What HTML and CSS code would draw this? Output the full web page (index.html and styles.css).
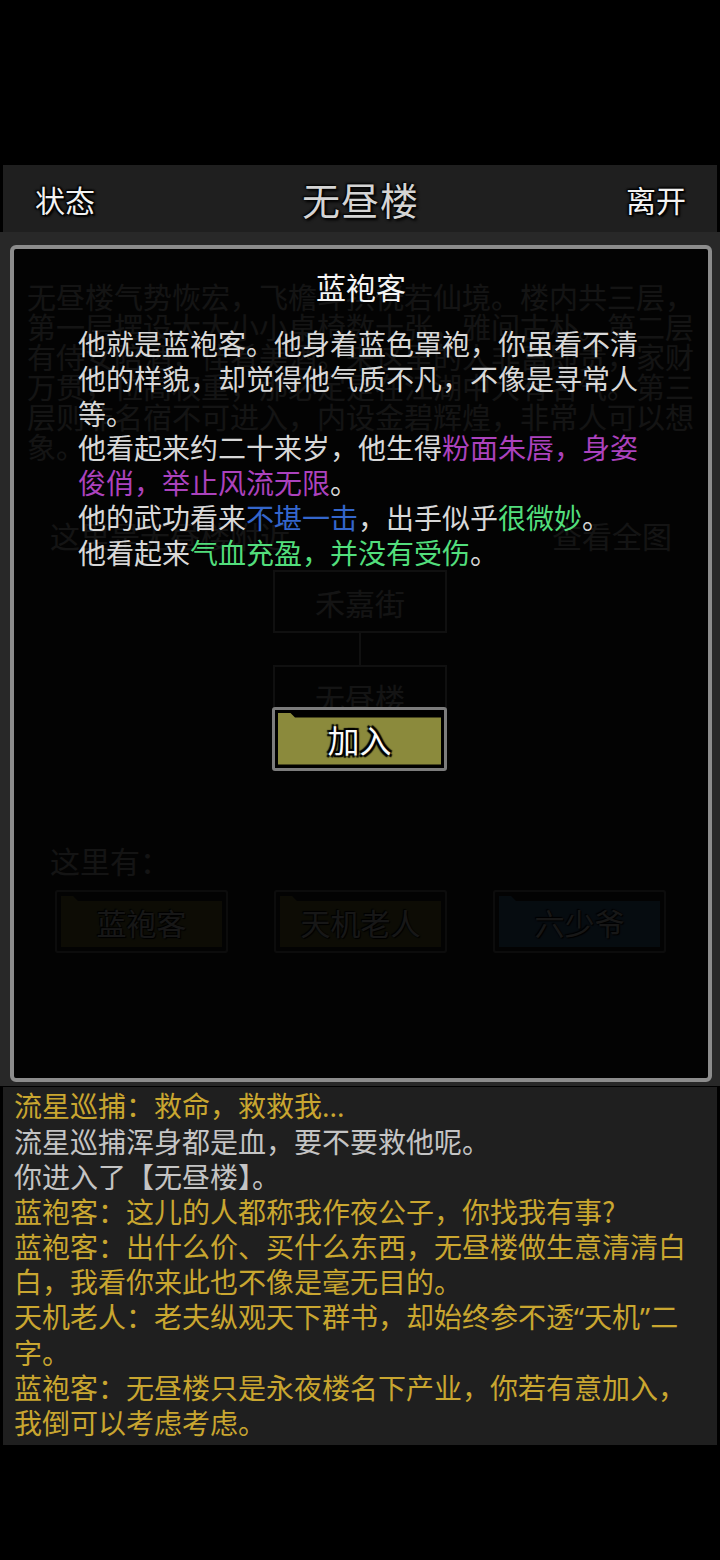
FILE: index.html
```html
<!DOCTYPE html>
<html lang="zh-CN">
<head>
    <meta charset="UTF-8">
    <meta name="viewport" content="width=device-width, initial-scale=1.0">
    <title>无昼楼</title>
    <link rel="stylesheet" href="styles.css">
</head>
<body>
<div class="screen">
    <div class="notch-space"></div>

    <header class="topbar">
        <span class="top-btn left">状态</span>
        <h1 class="top-title">无昼楼</h1>
        <span class="top-btn right">离开</span>
    </header>

    <main class="scene">
        <p class="scene-desc">无昼楼气势恢宏，飞檐斗拱恍若仙境。楼内共三层，<br>第一层摆设大大小小桌椅数十张，雅间古朴。第二层<br>有侍女陪酒，佳肴美酒。来这里的人非富即贵，家财<br>万贯，位高权重，那必定是在江湖中大有名气。第三<br>层则非名宿不可进入，内设金碧辉煌，非常人可以想<br>象。</p>

        <div class="scene-row">
            <span>这里是无昼楼附近</span>
            <span>查看全图</span>
        </div>

        <div class="map">
            <div class="map-node">禾嘉街</div>
            <div class="map-link"></div>
            <div class="map-node">无昼楼</div>
        </div>

        <div class="here">这里有：</div>
        <div class="npc-list">
            <div class="npc"><div class="npc-fill olive">蓝袍客</div></div>
            <div class="npc"><div class="npc-fill olive">天机老人</div></div>
            <div class="npc"><div class="npc-fill blue">六少爷</div></div>
        </div>

        <div class="modal">
            <h2 class="modal-title">蓝袍客</h2>
            <p class="modal-text">他就是蓝袍客。他身着蓝色罩袍，你虽看不清他的样貌，却觉得他气质不凡，不像是寻常人等。<br>他看起来约二十来岁，他生得<span class="purple">粉面朱唇，身姿俊俏，举止风流无限</span>。<br>他的武功看来<span class="blue-t">不堪一击</span>，出手似乎<span class="green">很微妙</span>。<br>他看起来<span class="green">气血充盈，并没有受伤</span>。</p>
            <button class="join" type="button"><span class="join-fill">加入</span></button>
        </div>
    </main>

    <section class="log">
        <p class="say">流星巡捕：救命，救救我<span class="latin">...</span></p>
        <p>流星巡捕浑身都是血，要不要救他呢。</p>
        <p>你进入了【无昼楼】。</p>
        <p class="say">蓝袍客：这儿的人都称我作夜公子，你找我有事?</p>
        <p class="say">蓝袍客：出什么价、买什么东西，无昼楼做生意清清白白，我看你来此也不像是毫无目的。</p>
        <p class="say">天机老人：老夫纵观天下群书，却始终参不透<span class="latin">“</span>天机<span class="latin">”</span>二字。</p>
        <p class="say">蓝袍客：无昼楼只是永夜楼名下产业，你若有意加入，我倒可以考虑考虑。</p>
    </section>
</div>
</body>
</html>
```

FILE: styles.css
```css
body {
    margin: 0;
    background: #000;
    font-family: "Noto Sans CJK SC", "Noto Sans", sans-serif;
    color: #d8d8d8;
}
p, h1, h2 {
    margin: 0;
    font-weight: normal;
}
.screen {
    width: 720px;
    height: 1560px;
    display: flex;
    flex-direction: column;
}
.notch-space {
    height: 165px;
}

/* top bar */
.topbar {
    height: 67px;
    margin: 0 3px;
    background: #1f1f1f;
    display: grid;
    grid-template-columns: 1fr auto 1fr;
    align-items: center;
    padding: 0 31px 0 32px;
}
.top-btn {
    font-size: 30px;
    color: #f2f2f2;
    text-shadow: 0 0 2px #000, 2px 2px 2px #000, -1px -1px 2px #000, 1px -1px 2px #000, -1px 1px 2px #000;
}
.top-btn.right {
    justify-self: end;
}
.top-title {
    font-size: 38px;
    color: #d4d4d4;
    letter-spacing: 1px;
    text-shadow: 0 0 3px #000, 2px 2px 3px #000, -1px -1px 2px #000;
}

/* scene behind the dialog */
.scene {
    position: relative;
    height: 854px;
    background: #282828;
    color: #dcdcdc;
}
.scene-desc {
    padding: 49px 0 0 27px;
    font-size: 29px;
    line-height: 30px;
    white-space: nowrap;
}
.scene-row {
    display: flex;
    justify-content: space-between;
    margin-top: 54px;
    padding: 0 48px 0 50px;
    font-size: 30px;
    line-height: 40px;
}
.map {
    display: flex;
    flex-direction: column;
    align-items: center;
    margin-top: 15px;
}
.map-node {
    width: 174px;
    height: 63px;
    box-sizing: border-box;
    border: 2px solid #b0b0b0;
    display: flex;
    align-items: center;
    justify-content: center;
    font-size: 30px;
}
.map-link {
    width: 2px;
    height: 32px;
    background: #b0b0b0;
}
.here {
    margin-top: 112px;
    padding-left: 50px;
    font-size: 30px;
    line-height: 40px;
}
.npc-list {
    display: grid;
    grid-template-columns: repeat(3, 173px);
    column-gap: 46px;
    margin-top: 10px;
    padding-left: 55px;
}
.npc {
    height: 63px;
    box-sizing: border-box;
    border: 2px solid #8a8a8a;
    border-radius: 3px;
    padding: 4px;
}
.npc-fill {
    height: 100%;
    display: flex;
    align-items: center;
    justify-content: center;
    font-size: 30px;
    color: #fff;
    clip-path: polygon(0 0, 12px 0, 17px 5px, 100% 5px, 100% 100%, 0 100%);
    text-shadow: 0 0 2px #000, 1px 1px 1px #000, -1px -1px 1px #000;
}
.npc-fill.olive {
    background: #8b8a3c;
}
.npc-fill.blue {
    background: #4680b4;
}

/* dialog */
.modal {
    position: absolute;
    top: 13px;
    left: 10px;
    width: 702px;
    height: 837px;
    box-sizing: border-box;
    border: 4px solid #8c8c8c;
    border-radius: 6px;
    background: rgba(0, 0, 0, 0.91);
    display: flex;
    flex-direction: column;
    align-items: center;
}
.modal-title {
    margin-top: 17px;
    font-size: 30px;
    line-height: 40px;
    color: #f4f4f4;
}
.modal-text {
    align-self: flex-start;
    width: 572px;
    margin: 20px 0 0 64px;
    font-size: 28px;
    line-height: 34.8px;
    color: #d8d8d8;
}
.purple {
    color: #ab42bd;
}
.blue-t {
    color: #3466cc;
}
.green {
    color: #52de7c;
}
.join {
    margin-top: 137px;
    margin-left: -3px;
    width: 175px;
    height: 64px;
    padding: 3px;
    border: 3px solid #7c7c7c;
    border-radius: 3px;
    background: #000;
    font-family: inherit;
    cursor: pointer;
}
.join-fill {
    height: 100%;
    display: flex;
    align-items: center;
    justify-content: center;
    background: #8b8a3c;
    clip-path: polygon(0 0, 12px 0, 17px 5px, 100% 5px, 100% 100%, 0 100%);
    font-size: 32px;
    color: #fafafa;
    text-shadow: 0 0 2px #000, 2px 2px 1px #000, -2px -2px 1px #000, 2px -2px 1px #000, -2px 2px 1px #000;
}

/* message log */
.log {
    height: 358px;
    margin: 1px 3px 0;
    box-sizing: border-box;
    padding: 1px 12px 0 11px;
    background: #1f1f1f;
    font-size: 28px;
    line-height: 35px;
    color: #c4c4c4;
}
.log .say {
    color: #c9a630;
}
.latin {
    font-family: "Noto Sans", sans-serif;
}
```
